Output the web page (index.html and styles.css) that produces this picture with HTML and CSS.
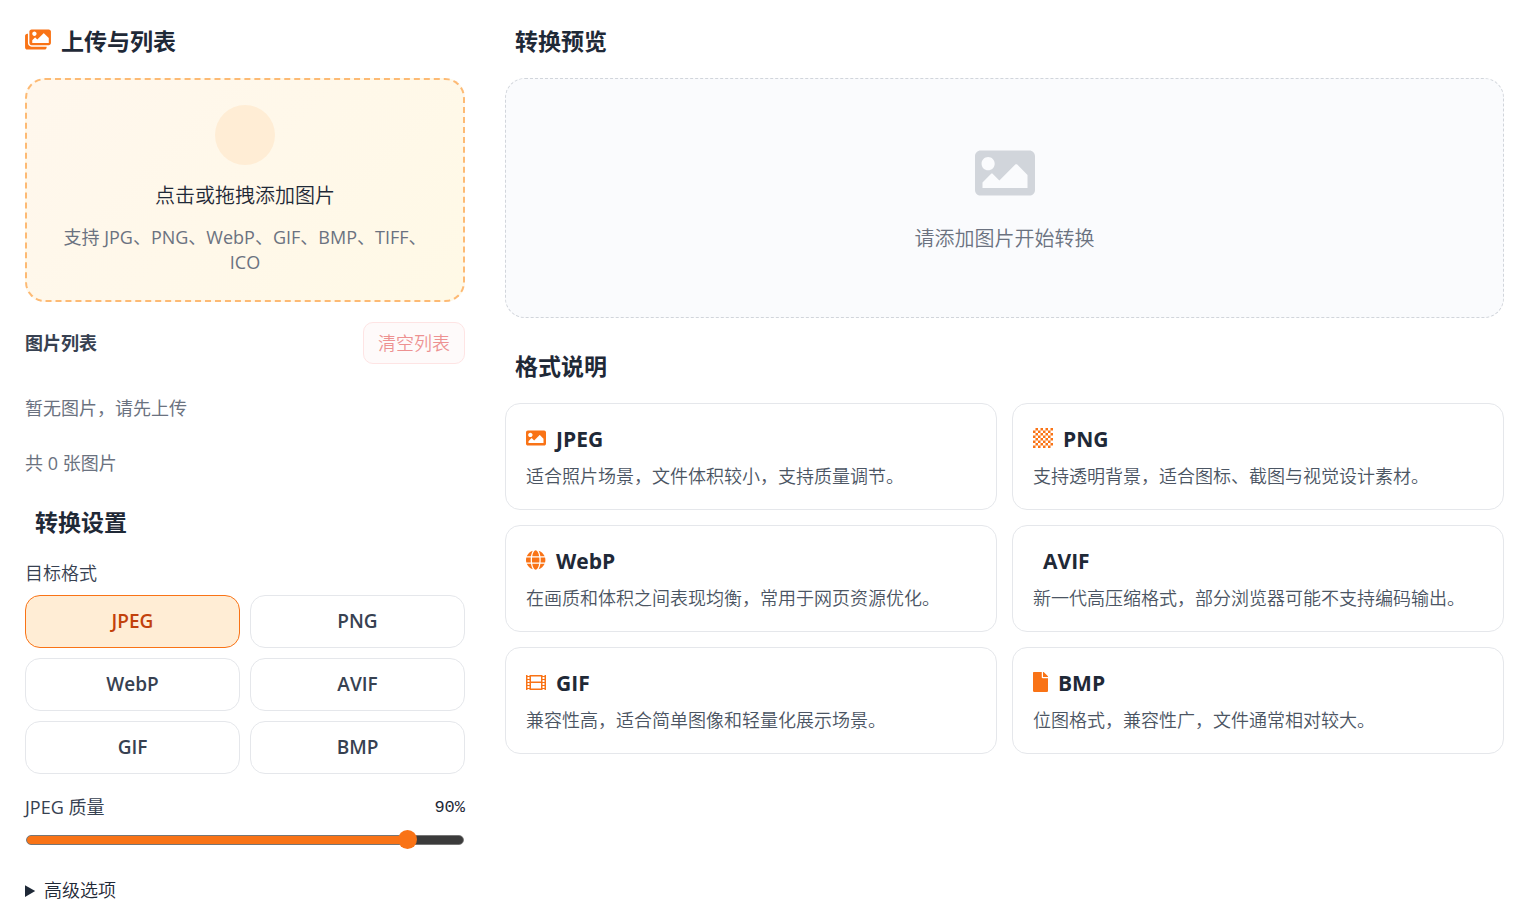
FILE: index.html
```
<!DOCTYPE html>
<html lang="zh-CN">
<head>
  <meta charset="UTF-8">
  <meta name="viewport" content="width=device-width, initial-scale=1.0">
  <title>图片格式转换</title>
  <link rel="stylesheet" href="styles.css">
</head>
<body>
  <main class="converter">
    <section class="sidebar">
      <h2 class="section-title">
        <svg class="icon" width="26" height="23" viewBox="0 0 576 512"><path d="M480 416v16c0 26.51-21.49 48-48 48H48c-26.51 0-48-21.49-48-48V176c0-26.51 21.49-48 48-48h16v208c0 44.112 35.888 80 80 80h336zm96-80V80c0-26.51-21.49-48-48-48H144c-26.51 0-48 21.49-48 48v256c0 26.51 21.49 48 48 48h384c26.51 0 48-21.49 48-48zM256 128c0 26.51-21.49 48-48 48s-48-21.49-48-48 21.49-48 48-48 48 21.49 48 48zm-96 144l55.515-55.515c4.686-4.686 12.284-4.686 16.971 0L272 256l135.515-135.515c4.686-4.686 12.284-4.686 16.971 0L528 224v112H160v-64z"/></svg>
        <span>上传与列表</span>
      </h2>

      <button type="button" class="upload-area">
        <span class="upload-icon"></span>
        <span class="upload-title">点击或拖拽添加图片</span>
        <span class="upload-hint">支持 JPG、PNG、WebP、GIF、BMP、TIFF、ICO</span>
      </button>

      <div class="list-header">
        <h3>图片列表</h3>
        <button type="button" class="clear-btn" disabled>清空列表</button>
      </div>
      <p class="list-note">暂无图片，请先上传</p>
      <p class="list-note">共 0 张图片</p>

      <h2 class="section-title no-icon settings-title">转换设置</h2>
      <p class="field-label" id="format-label">目标格式</p>
      <div class="format-grid" role="group" aria-labelledby="format-label">
        <button type="button" class="format-btn active">JPEG</button>
        <button type="button" class="format-btn">PNG</button>
        <button type="button" class="format-btn">WebP</button>
        <button type="button" class="format-btn">AVIF</button>
        <button type="button" class="format-btn">GIF</button>
        <button type="button" class="format-btn">BMP</button>
      </div>

      <div class="quality-row">
        <label for="quality">JPEG 质量</label>
        <output for="quality">90%</output>
      </div>
      <input type="range" id="quality" class="quality-slider" min="10" max="100" value="90">

      <details class="advanced">
        <summary>高级选项</summary>
      </details>
    </section>

    <section class="content">
      <h2 class="section-title no-icon">转换预览</h2>
      <div class="preview">
        <svg width="60" height="60" viewBox="0 0 512 512"><path d="M464 448H48c-26.51 0-48-21.49-48-48V112c0-26.51 21.49-48 48-48h416c26.51 0 48 21.49 48 48v288c0 26.51-21.49 48-48 48zM112 120c-30.928 0-56 25.072-56 56s25.072 56 56 56 56-25.072 56-56-25.072-56-56-56zM64 384h384V272l-87.515-87.515c-4.686-4.686-12.284-4.686-16.971 0L208 320l-55.515-55.515c-4.686-4.686-12.284-4.686-16.971 0L64 336v48z"/></svg>
        <p>请添加图片开始转换</p>
      </div>

      <h2 class="section-title no-icon formats-title">格式说明</h2>
      <div class="card-grid">
        <article class="card">
          <h3>
            <svg class="icon" width="20" height="20" viewBox="0 0 512 512"><path d="M464 448H48c-26.51 0-48-21.49-48-48V112c0-26.51 21.49-48 48-48h416c26.51 0 48 21.49 48 48v288c0 26.51-21.49 48-48 48zM112 120c-30.928 0-56 25.072-56 56s25.072 56 56 56 56-25.072 56-56-25.072-56-56-56zM64 384h384V272l-87.515-87.515c-4.686-4.686-12.284-4.686-16.971 0L208 320l-55.515-55.515c-4.686-4.686-12.284-4.686-16.971 0L64 336v48z"/></svg>
            <span>JPEG</span>
          </h3>
          <p>适合照片场景，文件体积较小，支持质量调节。</p>
        </article>
        <article class="card">
          <h3>
            <svg class="icon" width="20" height="20" viewBox="0 0 8 8">
              <defs>
                <pattern id="checker" width="2" height="2" patternUnits="userSpaceOnUse"><path d="M1 0h1v1h-1zM0 1h1v1h-1z"/></pattern>
              </defs>
              <rect width="8" height="8" fill="url(#checker)"/>
            </svg>
            <span>PNG</span>
          </h3>
          <p>支持透明背景，适合图标、截图与视觉设计素材。</p>
        </article>
        <article class="card">
          <h3>
            <svg class="icon" width="20" height="20" viewBox="0 0 512 512"><path d="M336.500 160C322 70.700 287.800 8 248 8s-74 62.700-88.500 152h177zM152 256c0 22.200 1.200 43.500 3.300 64h185.300c2.100-20.500 3.300-41.800 3.300-64s-1.200-43.500-3.300-64H155.300c-2.100 20.500-3.300 41.800-3.300 64zm324.700-96c-28.600-67.900-86.500-120.400-158-141.600 24.400 33.800 41.200 84.700 50 141.600h108zM177.200 18.400C105.800 39.600 47.800 92.100 19.300 160h108c8.700-56.900 25.500-107.800 49.900-141.600zM487.400 192H372.700c2.100 21 3.300 42.500 3.300 64s-1.200 43-3.300 64h114.600c5.500-20.500 8.600-41.800 8.600-64s-3.100-43.500-8.500-64zM120 256c0-21.500 1.200-43 3.300-64H8.600C3.200 212.500 0 233.800 0 256s3.200 43.500 8.600 64h114.600c-2-21-3.200-42.500-3.200-64zm39.500 96c14.500 89.300 48.700 152 88.500 152s74-62.700 88.500-152h-177zm159.300 141.600c71.400-21.200 129.400-73.700 158-141.600h-108c-8.800 56.900-25.600 107.800-50 141.600zM19.300 352c28.600 67.900 86.500 120.400 158 141.600-24.400-33.800-41.200-84.700-50-141.600h-108z"/></svg>
            <span>WebP</span>
          </h3>
          <p>在画质和体积之间表现均衡，常用于网页资源优化。</p>
        </article>
        <article class="card">
          <h3 class="no-icon">AVIF</h3>
          <p>新一代高压缩格式，部分浏览器可能不支持编码输出。</p>
        </article>
        <article class="card">
          <h3>
            <svg class="icon" width="20" height="20" viewBox="0 0 20 20"><path fill-rule="evenodd" d="M0 3h1.500v1h2V3h13v1h2V3H20v15h-1.500v-1h-2v1h-13v-1h-2v1H0zM1.500 5v2h2V5zM1.500 8v2h2V8zM1.500 11v2h2v-2zM1.500 14v2h2v-2zM16.500 5v2h2V5zM16.500 8v2h2V8zM16.500 11v2h2v-2zM16.500 14v2h2v-2zM5 4.500v5h10v-5zM5 11v5.500h10V11z"/></svg>
            <span>GIF</span>
          </h3>
          <p>兼容性高，适合简单图像和轻量化展示场景。</p>
        </article>
        <article class="card">
          <h3>
            <svg class="icon" width="15" height="20" viewBox="0 0 384 512"><path d="M224 136V0H24C10.700 0 0 10.700 0 24v464c0 13.300 10.700 24 24 24h336c13.300 0 24-10.700 24-24V160H248c-13.200 0-24-10.800-24-24zm160-14.100v6.100H256V0h6.100c6.400 0 12.500 2.500 17 7l97.900 98c4.500 4.500 7 10.600 7 16.900z"/></svg>
            <span>BMP</span>
          </h3>
          <p>位图格式，兼容性广，文件通常相对较大。</p>
        </article>
      </div>
    </section>
  </main>
</body>
</html>
```
FILE: styles.css
```
* {
  box-sizing: border-box;
}

body {
  margin: 0;
  background: #fff;
  color: #1f2937;
  font-family: "Open Sans", "Noto Sans CJK SC", sans-serif;
  font-size: 18px;
  font-weight: 350;
  line-height: 25px;
}

h2,
h3,
p {
  margin: 0;
}

button {
  font: inherit;
  cursor: pointer;
}

.converter {
  display: grid;
  grid-template-columns: 440px 1fr;
  gap: 40px;
  padding: 25px 30px 20px 25px;
}

.icon {
  flex: none;
  margin-bottom: 2px;
  fill: #f97316;
}

.section-title {
  display: flex;
  align-items: center;
  gap: 10px;
  margin-bottom: 20px;
  font-size: 23px;
  font-weight: 700;
  line-height: 33px;
}

.section-title .icon {
  margin-bottom: 4px;
}

.no-icon {
  padding-left: 10px;
}

/* upload */
.upload-area {
  display: flex;
  flex-direction: column;
  align-items: center;
  width: 100%;
  padding: 25px 30px;
  border: 2px dashed #fdba74;
  border-radius: 20px;
  background: linear-gradient(135deg, #fff7ed, #fff9e6);
  color: #1f2937;
}

.upload-icon {
  width: 60px;
  height: 60px;
  border-radius: 50%;
  background: #ffedd5;
}

.upload-title {
  margin: 16px 0 14px;
  font-size: 20px;
  line-height: 30px;
}

.upload-hint {
  color: #6b7280;
  font-weight: 400;
}

/* list */
.list-header {
  display: flex;
  align-items: center;
  justify-content: space-between;
  margin: 20px 0 32px;
}

.list-header h3 {
  color: #374151;
  font-size: 18px;
  font-weight: 700;
}

.clear-btn {
  padding: 7px 14px;
  border: 1px solid #fecaca;
  border-radius: 10px;
  background: #fef7f7;
  color: #dc2626;
  line-height: 26px;
}

.clear-btn:disabled {
  opacity: 0.5;
  cursor: not-allowed;
}

.list-note {
  margin-bottom: 30px;
  color: #6b7280;
  font-weight: 400;
}

/* settings */
.settings-title {
  margin-bottom: 22px;
}

.field-label {
  margin-bottom: 9px;
  color: #374151;
}

.format-grid {
  display: grid;
  grid-template-columns: 1fr 1fr;
  gap: 10px;
}

.format-btn {
  padding: 12px;
  border: 1px solid #e5e7eb;
  border-radius: 15px;
  background: #fff;
  color: #374151;
  font-size: 19px;
  font-weight: 600;
  line-height: 27px;
}

.format-btn.active {
  border-color: #f97316;
  background: #ffedd5;
  color: #c2410c;
}

.quality-row {
  display: flex;
  justify-content: space-between;
  margin-top: 21px;
  color: #374151;
  font-weight: 400;
}

.quality-row output {
  color: #1f2937;
  font-family: "Liberation Mono", monospace;
  font-size: 17px;
}

.quality-slider {
  display: block;
  width: 100%;
  height: 20px;
  margin: 10px 0 28px;
  background: none;
  appearance: none;
}

.quality-slider::-webkit-slider-runnable-track {
  height: 10px;
  margin: 0 1px;
  border: 1px solid #767676;
  border-radius: 5px;
  background: linear-gradient(90deg, #f97316 88%, #3b3b3b 88%);
}

.quality-slider::-webkit-slider-thumb {
  width: 19px;
  height: 19px;
  margin-top: -6px;
  border-radius: 50%;
  background: #f97316;
  appearance: none;
}

.advanced summary {
  cursor: pointer;
}

/* preview */
.preview {
  display: flex;
  flex-direction: column;
  align-items: center;
  justify-content: center;
  gap: 21px;
  min-height: 240px;
  border: 1px dashed #d1d5db;
  border-radius: 20px;
  background: #fafbfd;
  color: #6b7280;
  font-size: 20px;
  line-height: 30px;
}

.preview svg {
  fill: #d1d5db;
}

/* format cards */
.formats-title {
  margin-top: 32px;
}

.card-grid {
  display: grid;
  grid-template-columns: 1fr 1fr;
  gap: 15px;
}

.card {
  padding: 20px;
  border: 1px solid #e5e7eb;
  border-radius: 15px;
}

.card h3 {
  display: flex;
  align-items: center;
  gap: 10px;
  margin-bottom: 10px;
  font-size: 21px;
  font-weight: 700;
  line-height: 30px;
}

.card p {
  color: #4b5563;
}
```
